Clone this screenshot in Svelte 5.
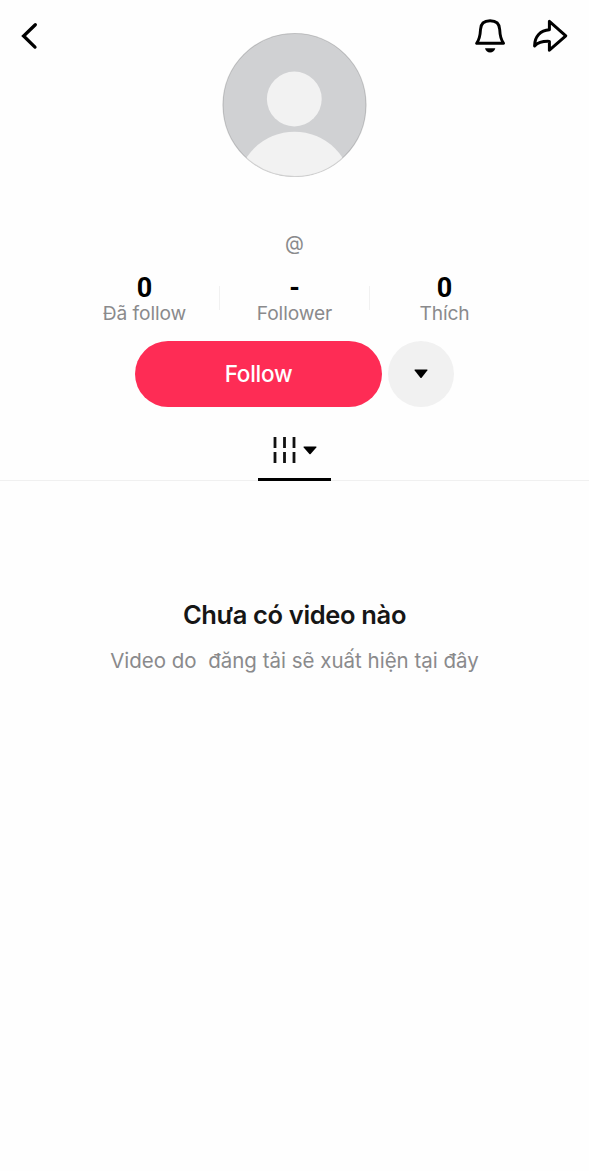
<script>
  const stats = [
    { value: '0', label: 'Đã follow' },
    { value: '-', label: 'Follower' },
    { value: '0', label: 'Thích' }
  ];
</script>

<main class="profile">
  <header class="top">
    <button class="icon back" aria-label="Quay lại">
      <svg width="60" height="72" viewBox="0 0 60 72">
        <path d="M35.3 24.7 23.6 36 35 47.1" fill="none" stroke="#000" stroke-width="3.3" stroke-linecap="round" stroke-linejoin="miter" />
      </svg>
    </button>
    <svg class="avatar" width="145" height="145" viewBox="0 0 145 145">
      <defs>
        <clipPath id="disc"><circle cx="72.5" cy="73" r="72" /></clipPath>
      </defs>
      <circle cx="72.5" cy="73" r="71.8" fill="#d0d1d3" />
      <g clip-path="url(#disc)" fill="#f2f2f2">
        <circle cx="72.3" cy="67" r="27.4" />
        <circle cx="72.5" cy="157" r="57.3" />
      </g>
      <circle cx="72.5" cy="73" r="71.5" fill="none" stroke="#000" stroke-opacity=".13" stroke-width="1.2" />
    </svg>
    <div class="actions">
      <button class="icon" aria-label="Thông báo">
        <svg width="36" height="40" viewBox="0 0 36 40">
          <path d="M4.6 27.3H31.6C28.7 23.5 28 20 27.7 13.5 27.5 7.5 24 4.7 18.1 4.7S8.7 7.5 8.5 13.5C8.2 20 7.5 23.5 4.6 27.3Z" fill="none" stroke="#000" stroke-width="2.9" stroke-linejoin="round" />
          <path d="M13 32.2H23.3C22.7 34.7 20.8 36.4 18.1 36.4S13.6 34.7 13 32.2Z" fill="#000" />
        </svg>
      </button>
      <button class="icon" aria-label="Chia sẻ">
        <svg width="40" height="40" viewBox="0 0 40 40">
          <path d="M19.4 5.3 35.8 19.8 19.4 34.2V25.4C12.8 25.1 8.6 25.9 4.6 30 4.6 20.4 10.4 14.3 19.4 13.8Z" fill="none" stroke="#000" stroke-width="3" stroke-linejoin="round" />
        </svg>
      </button>
    </div>
  </header>

  <p class="handle">@</p>

  <section class="stats">
    {#each stats as stat}
      <div class="stat">
        <strong>{stat.value}</strong>
        <span>{stat.label}</span>
      </div>
    {/each}
  </section>

  <div class="cta">
    <button class="follow">Follow</button>
    <button class="more" aria-label="Thêm">
      <svg width="14" height="10" viewBox="0 0 14 10"><path d="M1 .6H13Q13.8.7 13.3 1.4L7.6 8.7Q7 9.3 6.4 8.7L.7 1.4Q.2.7 1 .6Z" /></svg>
    </button>
  </div>

  <nav class="tabs">
    <button class="tab" aria-label="Video">
      <svg width="25" height="28" viewBox="0 0 25 28" fill="none" stroke="#111" stroke-width="2.8">
        <path d="M3 1V12M12.5 1V12M22 1V12M3 16V27M12.5 16V27M22 16V27" />
      </svg>
      <svg width="14" height="10" viewBox="0 0 14 10"><path d="M1 1.6H13Q13.8 1.7 13.3 2.4L7.6 8.9Q7 9.5 6.4 8.9L.7 2.4Q.2 1.7 1 1.6Z" /></svg>
    </button>
  </nav>

  <section class="empty">
    <h2>Chưa có video nào</h2>
    <p>Video do&nbsp; đăng tải sẽ xuất hiện tại đây</p>
  </section>
</main>

<style>
  :global(body) {
    margin: 0;
    background: #fefefe;
  }
  .profile {
    min-height: 1171px;
    font-family: Inter, Roboto, sans-serif;
    color: #000;
    background: #fefefe;
  }
  button {
    border: 0;
    padding: 0;
    background: none;
    font: inherit;
    color: inherit;
  }
  svg {
    display: block;
  }
  .top {
    display: grid;
    grid-template-columns: 1fr 145px 1fr;
    align-items: start;
    height: 178px;
  }
  .back {
    justify-self: start;
  }
  .avatar {
    margin-top: 32px;
  }
  .actions {
    display: flex;
    justify-content: flex-end;
    gap: 22px;
    padding: 16px 19px 0 0;
  }
  .handle {
    margin: 52px 0 0;
    height: 26px;
    line-height: 27px;
    font-size: 19.5px;
    text-align: center;
    color: #8a8a8c;
  }
  .stats {
    display: grid;
    grid-template-columns: repeat(3, 150px);
    justify-content: center;
    margin-top: 18px;
  }
  .stat {
    display: flex;
    flex-direction: column;
    align-items: center;
    height: 53px;
    background: linear-gradient(#f1f1f1, #f1f1f1) no-repeat right 12px / 1px 24px;
  }
  .stat:last-child {
    background: none;
  }
  .stat strong {
    height: 26px;
    line-height: 28px;
    font-size: 27px;
    font-weight: 700;
    font-family: Roboto, sans-serif;
  }
  .stat span {
    line-height: 27px;
    font-size: 19.2px;
    letter-spacing: -0.1px;
    color: #8a8a8c;
  }
  .cta {
    display: flex;
    justify-content: center;
    gap: 6px;
    margin-top: 14px;
  }
  .follow {
    width: 247px;
    height: 66px;
    padding-bottom: 2px;
    border-radius: 33px;
    background: #fe2c55;
    color: #fff;
    font-size: 22.5px;
    letter-spacing: -0.25px;
    font-weight: 500;
  }
  .more {
    display: grid;
    place-items: center;
    width: 66px;
    height: 66px;
    border-radius: 50%;
    background: #f1f1f1;
  }
  .tabs {
    display: flex;
    justify-content: center;
    height: 73px;
    border-bottom: 1px solid #f0f0f0;
  }
  .tab {
    display: flex;
    align-items: center;
    justify-content: center;
    gap: 6px;
    width: 73px;
    height: 74px;
    padding: 15px 0 0;
    box-sizing: border-box;
    border-bottom: 3px solid #000;
  }
  .empty {
    padding-top: 116px;
    text-align: center;
  }
  .empty h2 {
    margin: 0;
    font-size: 25.5px;
    letter-spacing: -0.35px;
    line-height: 36px;
    font-weight: 600;
    color: #161616;
  }
  .empty p {
    margin: 13px 0 0;
    font-size: 20.5px;
    letter-spacing: 0;
    line-height: 30px;
    color: #8a8a8c;
  }
</style>
